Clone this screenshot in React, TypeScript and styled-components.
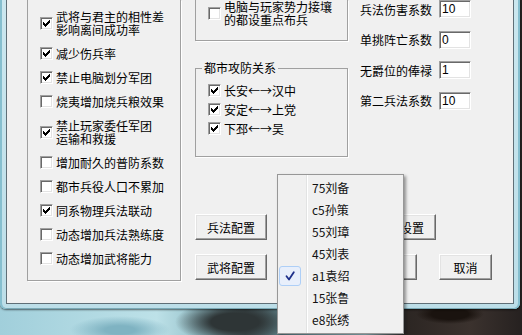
import React from 'react';
import styled, { createGlobalStyle } from 'styled-components';

const GlobalStyle = createGlobalStyle`
  html, body { margin: 0; padding: 0; }
  body {
    width: 522px;
    height: 335px;
    overflow: hidden;
    font-family: "Noto Sans CJK SC", "Liberation Sans", sans-serif;
    font-size: 12px;
    color: #000;
  }
`;

const Desktop = styled.div`
  position: relative;
  width: 522px;
  height: 335px;
  overflow: hidden;
  background:
    radial-gradient(ellipse 34px 10px at 450px 314px, #1a130f 55%, transparent 100%),
    radial-gradient(ellipse 60px 22px at 235px 322px, #2e3536 40%, transparent 100%),
    radial-gradient(ellipse 50px 14px at 120px 330px, #7fb3c2 30%, transparent 100%),
    linear-gradient(90deg, #a1cfdb 0%, #bde1e8 30%, #8fbcc5 40%, #46565a 47%, #6e9aa3 56%, #a6d2da 70%, #2c2623 78%, #3b322e 90%, #262120 100%);
`;

const Frame = styled.div`
  width: 520px;
  height: 309px;
  box-sizing: border-box;
  padding: 0 6px 5px 6px;
  border-radius: 0 0 6px 6px;
  background: linear-gradient(180deg, #cbe7ef 0%, #bcdee8 100%);
  box-shadow:
    inset 2px 0 0 #86bfcf,
    inset -2px 0 0 #86bfcf,
    inset 0 -1px 0 #7aa9b6,
    0 1px 2px rgba(0, 0, 0, 0.55);
`;

const Client = styled.div`
  height: 100%;
  box-sizing: border-box;
  display: flex;
  padding-left: 20px;
  background: #f0f0f0;
  border: 1px solid #5f6f77;
  border-top: none;
`;

const LeftGroup = styled.div`
  width: 154px;
  height: 281px;
  box-sizing: border-box;
  flex-shrink: 0;
  display: flex;
  flex-direction: column;
  gap: 11px;
  padding: 10px 0 0 12px;
  border: 1px solid #a0a0a0;
  border-top: none;
  box-shadow: 1px 1px 0 #fff;
`;

const MiddleColumn = styled.div`
  width: 153px;
  margin-left: 14px;
  flex-shrink: 0;
  display: flex;
  flex-direction: column;
  padding-bottom: 23px;
`;

const TopBox = styled.div`
  height: 41px;
  box-sizing: border-box;
  padding-left: 12px;
  border: 1px solid #a0a0a0;
  border-top: none;
  box-shadow: 1px 1px 0 #fff;
`;

const AttackBox = styled.fieldset`
  margin: 20px 0 0 0;
  height: 96px;
  box-sizing: border-box;
  padding: 9px 0 0 12px;
  border: 1px solid #a0a0a0;
  box-shadow: 1px 1px 0 #fff;
  display: flex;
  flex-direction: column;
  gap: 6px;
`;

const Legend = styled.legend`
  margin-left: -6px;
  padding: 0 2px;
  line-height: 14px;
  font-size: 12px;
`;

const ButtonStack = styled.div`
  margin-top: auto;
  display: flex;
  flex-direction: column;
  gap: 14px;
`;

const ButtonRow = styled.div<{ $indent?: number }>`
  display: flex;
  gap: 22px;
  padding-left: ${p => p.$indent ?? 0}px;
`;

const RightColumn = styled.div`
  flex: 1;
  margin-left: 12px;
  display: flex;
  flex-direction: column;
  padding-bottom: 23px;
`;

const Fields = styled.div`
  display: flex;
  flex-direction: column;
  gap: 12.5px;
`;

const FieldRow = styled.label`
  display: flex;
  align-items: center;
  height: 18px;
`;

const FieldLabel = styled.span`
  width: 79px;
  line-height: 13px;
  white-space: nowrap;
`;

const NumberBox = styled.input`
  width: 32px;
  height: 18px;
  box-sizing: border-box;
  padding: 0 0 0 2px;
  margin: 0;
  background: #fff;
  border: 1px solid;
  border-color: #a0a0a0 #fff #fff #a0a0a0;
  box-shadow: inset 1px 1px 0 #696969, inset -1px -1px 0 #e3e3e3;
  font: 12px "Liberation Sans", Arial, sans-serif;
  color: #000;
  outline: none;
`;

const Button = styled.button<{ $w?: number }>`
  width: ${p => p.$w ?? 72}px;
  height: 26px;
  box-sizing: border-box;
  padding: 0;
  background: #f0f0f0;
  border: 1px solid;
  border-color: #fff #696969 #696969 #fff;
  box-shadow: inset -1px -1px 0 #a0a0a0, inset 1px 1px 0 #e3e3e3;
  font: 12px "Noto Sans CJK SC", sans-serif;
  line-height: 13px;
  color: #000;
`;

const CheckRow = styled.label`
  display: flex;
  align-items: center;
  gap: 3px;
`;

const Box = styled.span`
  width: 13px;
  height: 13px;
  flex-shrink: 0;
  box-sizing: border-box;
  background: #fff;
  border: 1px solid;
  border-color: #a0a0a0 #fff #fff #a0a0a0;
  box-shadow: inset 1px 1px 0 #696969, inset -1px -1px 0 #e3e3e3;
  display: block;
  position: relative;
`;

const CheckText = styled.span`
  line-height: 13px;
  white-space: nowrap;
`;

const Menu = styled.div`
  position: absolute;
  left: 277px;
  top: 174px;
  width: 127px;
  height: 160px;
  box-sizing: border-box;
  padding-top: 2px;
  border: 1px solid #979797;
  background:
    linear-gradient(90deg, transparent 28px, #e2e3e3 28px, #e2e3e3 29px, #ffffff 29px, #ffffff 30px, transparent 30px),
    #f0f0f0;
  box-shadow: 2px 2px 3px rgba(0, 0, 0, 0.4);
`;

const MenuItem = styled.div`
  height: 22px;
  display: flex;
  align-items: center;
`;

const MenuCheck = styled.span<{ $on?: boolean }>`
  width: 22px;
  height: 20px;
  margin-left: 1px;
  box-sizing: border-box;
  border-radius: 3px;
  display: flex;
  align-items: center;
  justify-content: center;
  border: 1px solid ${p => (p.$on ? '#aecff7' : 'transparent')};
  background: ${p => (p.$on ? '#e8effb' : 'transparent')};
`;

const MenuText = styled.span`
  margin-left: 11px;
  line-height: 14px;
  color: #111;
  font-family: "Noto Sans CJK SC", "Open Sans", sans-serif;
`;

const CHECK_ROWS = [[6], [5, 6], [0, 4, 5, 6], [0, 1, 3, 4, 5], [0, 1, 2, 3, 4], [1, 2, 3], [2]];
const checkPath = CHECK_ROWS.map((row, y) => row.map(x => `M${x} ${y}h1v1h-1z`).join('')).join('');

const Check = ({ on, children }: { on?: boolean; children: React.ReactNode }) => (
  <CheckRow>
    <Box>
      {on && (
        <svg width="7" height="7" viewBox="0 0 7 7" style={{ position: 'absolute', left: 2, top: 2 }} shapeRendering="crispEdges">
          <path d={checkPath} fill="#000" />
        </svg>
      )}
    </Box>
    <CheckText>{children}</CheckText>
  </CheckRow>
);

const leftOptions: [boolean, React.ReactNode][] = [
  [true, <>武将与君主的相性差<br />影响离间成功率</>],
  [true, '减少伤兵率'],
  [true, '禁止电脑划分军团'],
  [false, '烧夷增加烧兵粮效果'],
  [true, <>禁止玩家委任军团<br />运输和救援</>],
  [false, '增加耐久的普防系数'],
  [false, '都市兵役人口不累加'],
  [true, '同系物理兵法联动'],
  [false, '动态增加兵法熟练度'],
  [false, '动态增加武将能力'],
];

const routes = ['长安←→汉中', '安定←→上党', '下邳←→吴'];

const fields = [
  ['兵法伤害系数', '10'],
  ['单挑阵亡系数', '0'],
  ['无爵位的俸禄', '1'],
  ['第二兵法系数', '10'],
];

const rulers = ['75刘备', 'c5孙策', '55刘璋', '45刘表', 'a1袁绍', '15张鲁', 'e8张绣'];

export default function App() {
  return (
    <>
      <GlobalStyle />
      <Desktop>
        <Frame>
          <Client>
            <LeftGroup>
              {leftOptions.map(([on, text], i) => (
                <Check key={i} on={on}>{text}</Check>
              ))}
            </LeftGroup>

            <MiddleColumn>
              <TopBox>
                <Check>电脑与玩家势力接壤<br />的都设重点布兵</Check>
              </TopBox>
              <AttackBox>
                <Legend>都市攻防关系</Legend>
                {routes.map(r => (
                  <Check key={r} on>{r}</Check>
                ))}
              </AttackBox>
              <ButtonStack>
                <Button>兵法配置</Button>
                <Button>武将配置</Button>
              </ButtonStack>
            </MiddleColumn>

            <RightColumn>
              <Fields>
                {fields.map(([label, value]) => (
                  <FieldRow key={label}>
                    <FieldLabel>{label}</FieldLabel>
                    <NumberBox defaultValue={value} />
                  </FieldRow>
                ))}
              </Fields>
              <ButtonStack>
                <ButtonRow $indent={4}>
                  <Button>其他设置</Button>
                </ButtonRow>
                <ButtonRow $indent={4}>
                  <Button $w={53}>确定</Button>
                  <Button $w={53}>取消</Button>
                </ButtonRow>
              </ButtonStack>
            </RightColumn>
          </Client>
        </Frame>

        <Menu>
          {rulers.map(name => (
            <MenuItem key={name}>
              <MenuCheck $on={name === 'a1袁绍'}>
                {name === 'a1袁绍' && (
                  <svg width="12" height="12" viewBox="0 0 12 12">
                    <path d="M2.5 6.2 L5 9.5 L9.8 2.2" fill="none" stroke="#1d2f8a" strokeWidth="1.8" strokeLinecap="round" strokeLinejoin="round" />
                  </svg>
                )}
              </MenuCheck>
              <MenuText>{name}</MenuText>
            </MenuItem>
          ))}
        </Menu>
      </Desktop>
    </>
  );
}
